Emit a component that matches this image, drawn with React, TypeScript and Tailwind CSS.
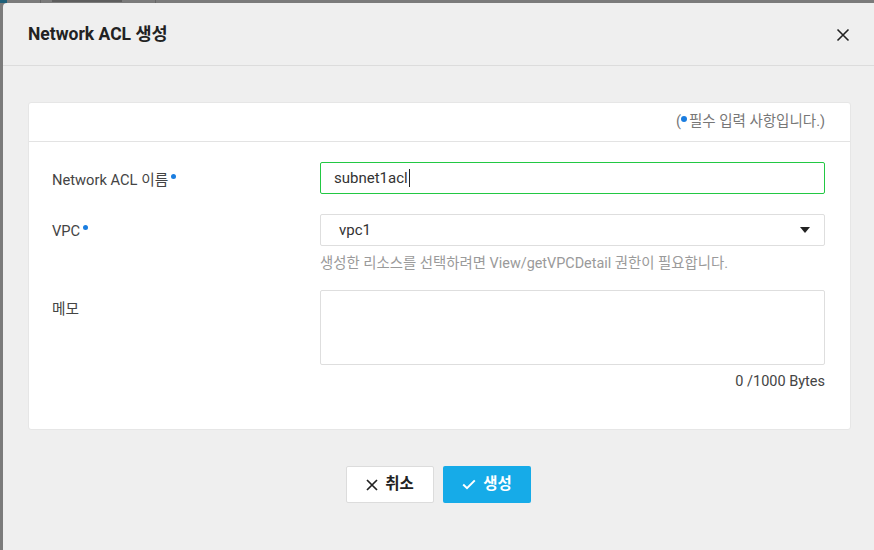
import React from "react";

const Dot = () => (
  <span className="inline-block w-[5px] h-[5px] rounded-full bg-[#1a7de0] ml-[3px] relative -top-[6px]" />
);

export default function App() {
  return (
    <div
      className="relative w-[874px] h-[550px] overflow-hidden bg-[#7b7b7b] pt-[3px] pl-[3px]"
      style={{ fontFamily: "Roboto, 'Noto Sans CJK KR', sans-serif" }}
    >
      {/* background page peeking behind overlay */}
      <div className="absolute left-0 top-0 w-[7px] h-[3px] bg-[#1f5f78]" />
      <div className="absolute left-[40px] top-0 w-[1px] h-[3px] bg-[#666]" />
      <div className="absolute left-[155px] top-0 w-[1px] h-[3px] bg-[#666]" />
      <div className="absolute left-[52px] top-0 w-[70px] h-[2px] bg-[#5e5e5e]" />

      <div className="w-[871px] h-[547px] bg-[#efefef] rounded-tl-[4px] flex flex-col">
        {/* header */}
        <div className="h-[63px] border-b border-[#dcdcdc] flex items-center justify-between pl-[25px] pr-[24px] shrink-0">
          <div className="text-[17.5px] font-bold text-[#222]">Network ACL 생성</div>
          <svg width="14" height="14" viewBox="0 0 14 14" className="mt-[2px]">
            <path d="M1.5 1.5 L12.5 12.5 M12.5 1.5 L1.5 12.5" stroke="#222" strokeWidth="1.6" fill="none" />
          </svg>
        </div>

        {/* card */}
        <div className="mt-[36px] ml-[25px] w-[823px] h-[328px] bg-white rounded-[3px] border border-[#e6e6e6] flex flex-col">
          <div className="h-[39px] border-b border-[#e3e3e3] flex items-center justify-end pr-[25px] text-[14.5px] text-[#777] shrink-0">
            <span>(</span>
            <span className="inline-block w-[6px] h-[6px] rounded-full bg-[#1a7de0] mr-[2px] relative -top-[3px]" />
            <span>필수 입력 사항입니다.)</span>
          </div>

          <div className="flex flex-col pl-[23px] pr-[25px] pt-[20px]">
            {/* row 1 */}
            <div className="flex">
              <div className="w-[268px] pt-[8px] text-[14.7px] text-[#444] leading-[20px]">
                Network ACL 이름<Dot />
              </div>
              <div className="flex-1 h-[32px] border border-[#22c843] rounded-[2px] flex items-center pl-[13px] text-[15px] text-[#333]">
                subnet1acl<span className="inline-block w-[1px] h-[18px] bg-[#222] ml-[1px]" />
              </div>
            </div>

            {/* row 2 */}
            <div className="flex mt-[20px]">
              <div className="w-[268px] pt-[7px] text-[14.7px] text-[#444] leading-[20px]">
                VPC<Dot />
              </div>
              <div className="flex-1 flex flex-col">
                <div className="h-[32px] border border-[#dedede] rounded-[2px] flex items-center justify-between pl-[18px] pr-[14px] text-[15px] text-[#333]">
                  <span>vpc1</span>
                  <svg width="10" height="6" viewBox="0 0 10 6">
                    <path d="M0 0 L10 0 L5 6 Z" fill="#222" />
                  </svg>
                </div>
                <div className="mt-[8px] text-[14.4px] text-[#9a9a9a] leading-[20px]">
                  생성한 리소스를 선택하려면 View/getVPCDetail 권한이 필요합니다.
                </div>
              </div>
            </div>

            {/* row 3 */}
            <div className="flex mt-[16px]">
              <div className="w-[268px] pt-[9px] text-[14.7px] text-[#444] leading-[20px]">메모</div>
              <div className="flex-1 flex flex-col">
                <div className="h-[75px] border border-[#dedede] rounded-[2px]" />
                <div className="mt-[7px] text-right text-[14.5px] text-[#444] leading-[20px]">0 /1000 Bytes</div>
              </div>
            </div>
          </div>
        </div>

        {/* buttons */}
        <div className="flex justify-center gap-[9px] mt-[36px]">
          <div className="w-[88px] h-[37px] bg-white border border-[#dcdcdc] rounded-[2px] flex items-center justify-center gap-[7px] text-[15.5px] font-bold text-[#222]">
            <svg width="12" height="12" viewBox="0 0 12 12">
              <path d="M1 1 L11 11 M11 1 L1 11" stroke="#222" strokeWidth="1.7" fill="none" />
            </svg>
            <span>취소</span>
          </div>
          <div className="w-[88px] h-[37px] bg-[#16abe8] rounded-[2px] flex items-center justify-center gap-[7px] text-[15.5px] font-bold text-white">
            <svg width="14" height="11" viewBox="0 0 14 11">
              <path d="M1.2 5.6 L5 9.2 L12.8 1.4" stroke="#fff" strokeWidth="2" fill="none" />
            </svg>
            <span>생성</span>
          </div>
        </div>
      </div>
    </div>
  );
}
